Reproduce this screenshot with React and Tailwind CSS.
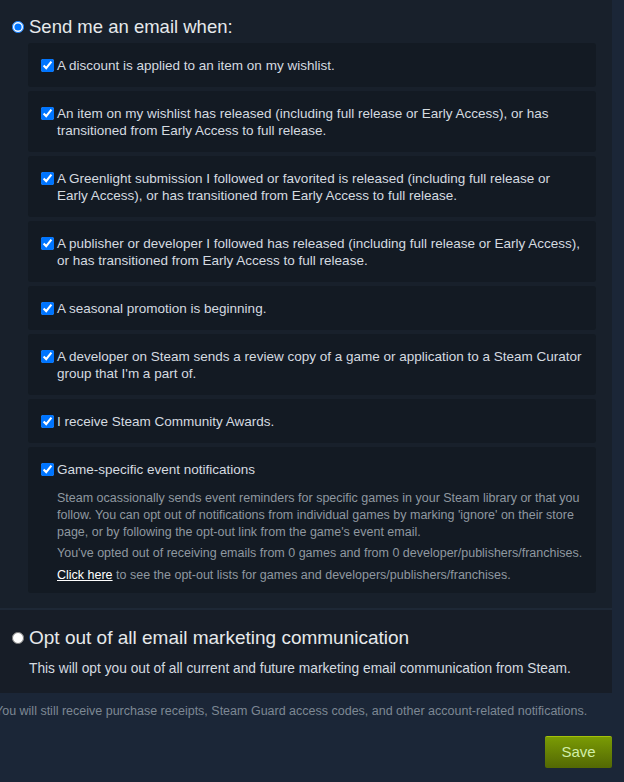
import React from 'react'

const options = [
    { text: "A discount is applied to an item on my wishlist." },
    { text: "An item on my wishlist has released (including full release or Early Access), or has transitioned from Early Access to full release." },
    { text: "A Greenlight submission I followed or favorited is released (including full release or Early Access), or has transitioned from Early Access to full release." },
    { text: "A publisher or developer I followed has released (including full release or Early Access), or has transitioned from Early Access to full release." },
    { text: "A seasonal promotion is beginning." },
    { text: "A developer on Steam sends a review copy of a game or application to a Steam Curator group that I'm a part of." },
    { text: "I receive Steam Community Awards." },
]

function Option({ children }) {
    return (
        <label className="flex items-start">
            <input type="checkbox" defaultChecked className="m-0 mt-[2px] w-[13px] h-[13px] shrink-0" />
            <span className="ml-[3px]">{children}</span>
        </label>
    )
}

export default function App() {
    return (
        <div className="min-h-screen w-[624px] bg-[#1b2637] font-['Liberation_Sans',Arial,sans-serif] overflow-hidden">
            <div className="w-[612px] bg-[#18202b] pt-[15px] pb-[15px]">
                <label className="flex items-center h-[24px] pl-[12px]">
                    <input type="radio" name="email" defaultChecked className="m-0 w-[12px] h-[12px]" />
                    <span className="ml-[5px] text-[18.5px] text-[#e6e9eb]">Send me an email when:</span>
                </label>
                <div className="mt-[4px] ml-[28px] w-[568px] flex flex-col gap-[4px] text-[13.5px] leading-[17px] text-[#d5dbe0]">
                    {options.map((o, i) => (
                        <div key={i} className="bg-[#131a23] rounded-[3px] pl-[13px] pr-[12px] pt-[14px] pb-[13px]">
                            <Option>{o.text}</Option>
                        </div>
                    ))}
                    <div className="bg-[#131a23] rounded-[3px] pl-[13px] pr-[6px] pt-[14px] pb-[9px]">
                        <Option>Game-specific event notifications</Option>
                        <div className="pl-[16px] mt-[12px] text-[12.5px] leading-[17px] text-[#8f98a0]">
                            <p>Steam ocassionally sends event reminders for specific games in your Steam library or that you follow. You can opt out of notifications from individual games by marking 'ignore' on their store page, or by following the opt-out link from the game's event email.</p>
                            <p className="mt-[4px]">You've opted out of receiving emails from 0 games and from 0 developer/publishers/franchises.</p>
                            <p className="mt-[5px]"><a href="#" className="text-white underline">Click here</a> to see the opt-out lists for games and developers/publishers/franchises.</p>
                        </div>
                    </div>
                </div>
            </div>
            <div className="w-[612px] h-[2px] bg-[#1e2836]"></div>
            <div className="w-[612px] bg-[#171d27] pt-[16px] pb-[16px]">
                <label className="flex items-center h-[24px] pl-[12px]">
                    <input type="radio" name="email" className="m-0 w-[12px] h-[12px]" />
                    <span className="ml-[5px] text-[19px] text-[#e6e9eb]">Opt out of all email marketing communication</span>
                </label>
                <p className="mt-[10px] pl-[29px] text-[13.75px] leading-[17px] text-[#d5dbe0]">This will opt you out of all current and future marketing email communication from Steam.</p>
            </div>
            <p className="-ml-[5px] mt-[10px] text-[12.5px] leading-[17px] text-[#7d8894] whitespace-nowrap">You will still receive purchase receipts, Steam Guard access codes, and other account-related notifications.</p>
            <div className="w-[612px] flex justify-end mt-[16px]">
                <button className="w-[67px] h-[32px] rounded-[2px] border-t border-[#a4c20a] bg-gradient-to-b from-[#7a9b04] to-[#536804] text-[#d2efa9] text-[15px] font-['Liberation_Sans',Arial,sans-serif]">Save</button>
            </div>
        </div>
    )
}
